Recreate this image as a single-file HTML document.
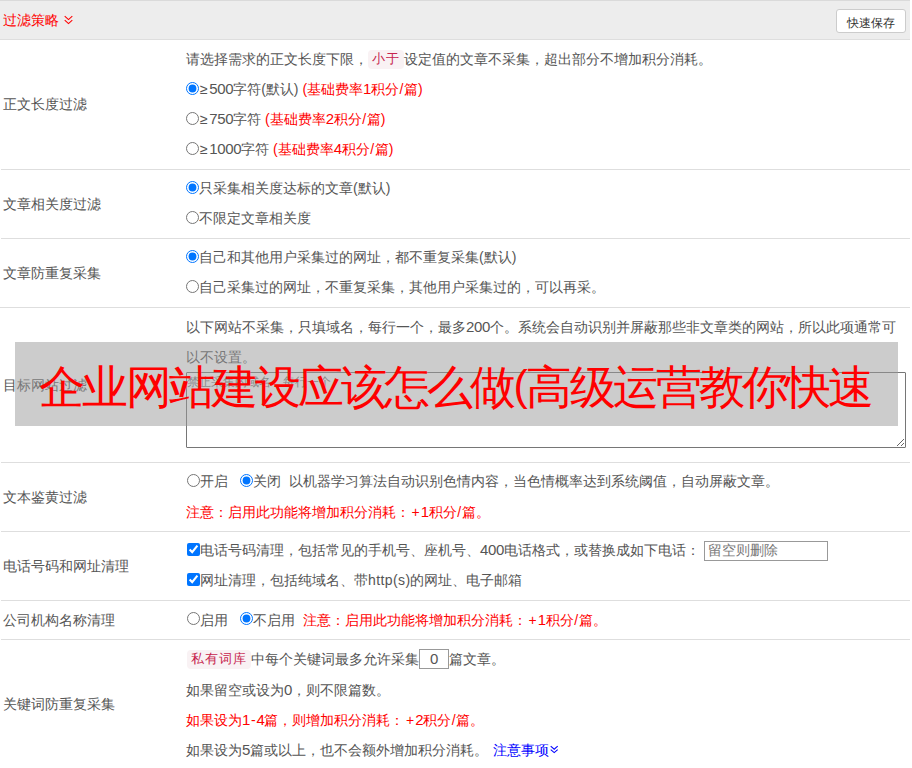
<!DOCTYPE html>
<html><head><meta charset="utf-8">
<style>
html,body{margin:0;padding:0;background:#fff;width:912px;height:768px;overflow:hidden;}
body{font-family:"Liberation Sans",sans-serif;font-size:14px;color:#555;position:relative;}
.a{position:absolute;white-space:nowrap;}
.hdr{left:0;top:0;width:910px;height:39px;background:#ededed;border-top:1px solid #dadada;box-sizing:border-box;}
.hl{position:absolute;left:1px;width:909px;height:1px;background:#dedede;}
.lbl{position:absolute;left:3px;height:30px;line-height:30px;white-space:nowrap;}
.ln{position:absolute;left:186px;height:30px;line-height:30px;white-space:nowrap;}
.red{color:#f00;}
i{font-style:normal;}
.ge{margin-left:1px;margin-right:1.5px;}
.n{font-size:15px;letter-spacing:-0.35px;}
.pl{margin-left:1.5px;margin-right:1px;}
.sl{margin-left:0.5px;margin-right:0.5px;}
.code{display:inline-block;background:#f9f2f4;color:#c7254e;border-radius:4px;font-size:12.6px;letter-spacing:1px;line-height:19px;height:19px;padding:0 4px;vertical-align:top;margin-top:6px;}
.rad{position:absolute;width:13px;height:13px;margin:0;}
.btn{left:836px;top:9px;width:69.5px;height:24px;box-sizing:border-box;border:1px solid #ccc;border-radius:3px;background:#fff;font-size:12px;line-height:22px;padding-top:2px;text-align:center;color:#333;}
.ov{left:15px;top:342px;width:883px;height:84px;background:rgba(153,153,153,0.5);overflow:hidden;text-align:center;}
.ov span{color:#f00;font-size:46px;letter-spacing:-2.9px;line-height:84px;position:absolute;left:24.4px;top:2.5px;white-space:nowrap;}
.ov b{font-weight:normal;font-size:43px;letter-spacing:0;margin-right:-1.4px;position:relative;top:-3px;}
textarea{position:absolute;left:186px;top:372px;width:720px;height:76px;box-sizing:border-box;margin:0;border:1px solid #767676;border-radius:1px;font-family:"Liberation Sans",sans-serif;font-size:12px;padding:1px 1.5px 1px 0;resize:both;}
textarea::placeholder{color:#777;}
.inp{position:absolute;box-sizing:border-box;border:1px solid #999;background:#fff;}
</style></head><body>
<!-- header -->
<div class="a hdr"></div>
<div class="hl" style="top:39px;left:0;width:910px"></div>
<div class="lbl red" style="top:5px">过滤策略</div>
<svg class="a" style="left:64px;top:15px" width="9" height="10" viewBox="0 0 9 10"><path d="M0.7 1.2L4.5 4.6L8.3 1.2M0.7 5.2L4.5 8.6L8.3 5.2" fill="none" stroke="#f00" stroke-width="1.1"/></svg>
<div class="a btn">快速保存</div>

<!-- row lines -->
<div class="hl" style="top:169px"></div>
<div class="hl" style="top:238px"></div>
<div class="hl" style="top:307px;left:0;width:910px"></div>
<div class="hl" style="top:462px"></div>
<div class="hl" style="top:531px"></div>
<div class="hl" style="top:600px"></div>
<div class="hl" style="top:639px"></div>

<!-- labels -->
<div class="lbl" style="top:89px">正文长度过滤</div>
<div class="lbl" style="top:189px">文章相关度过滤</div>
<div class="lbl" style="top:258px">文章防重复采集</div>
<div class="lbl" style="top:370px">目标网站过滤</div>
<div class="lbl" style="top:482px">文本鉴黄过滤</div>
<div class="lbl" style="top:551px">电话号码和网址清理</div>
<div class="lbl" style="top:605px">公司机构名称清理</div>
<div class="lbl" style="top:689px">关键词防重复采集</div>

<!-- row 2 -->
<div class="ln" style="top:44px">请选择需求的正文长度下限，<span class="code">小于</span>设定值的文章不采集，超出部分不增加积分消耗。</div>
<input type="radio" class="rad" style="left:186px;top:82px" checked>
<div class="ln" style="top:74px;left:199px"><i class="ge">≥</i><i class="n">500</i>字符(默认) <span class="red">(基础费率<i class="n">1</i>积分<i class="sl">/</i>篇)</span></div>
<input type="radio" class="rad" style="left:186px;top:112px">
<div class="ln" style="top:104px;left:199px"><i class="ge">≥</i><i class="n">750</i>字符 <span class="red">(基础费率<i class="n">2</i>积分<i class="sl">/</i>篇)</span></div>
<input type="radio" class="rad" style="left:186px;top:142px">
<div class="ln" style="top:134px;left:199px"><i class="ge">≥</i><i class="n">1000</i>字符 <span class="red">(基础费率<i class="n">4</i>积分<i class="sl">/</i>篇)</span></div>

<!-- row 3 -->
<input type="radio" class="rad" style="left:186px;top:181px" checked>
<div class="ln" style="top:173px;left:199px">只采集相关度达标的文章(默认)</div>
<input type="radio" class="rad" style="left:186px;top:211px">
<div class="ln" style="top:203px;left:199px">不限定文章相关度</div>

<!-- row 4 -->
<input type="radio" class="rad" style="left:186px;top:250px" checked>
<div class="ln" style="top:242px;left:199px">自己和其他用户采集过的网址，都不重复采集(默认)</div>
<input type="radio" class="rad" style="left:186px;top:280px">
<div class="ln" style="top:272px;left:199px">自己采集过的网址，不重复采集，其他用户采集过的，可以再采。</div>

<!-- row 5 -->
<div class="ln" style="top:312px">以下网站不采集，只填域名，每行一个，最多<i class="n">200</i>个。系统会自动识别并屏蔽那些非文章类的网站，所以此项通常可</div>
<div class="ln" style="top:342px">以不设置。</div>
<textarea placeholder="禁止采集的域名，每行一个"></textarea>

<!-- row 6 -->
<input type="radio" class="rad" style="left:187px;top:474px">
<div class="ln" style="top:466px;left:200px">开启</div>
<input type="radio" class="rad" style="left:240px;top:474px" checked>
<div class="ln" style="top:466px;left:253px">关闭</div>
<div class="ln" style="top:466px;left:289px">以机器学习算法自动识别色情内容，当色情概率达到系统阈值，自动屏蔽文章。</div>
<div class="ln red" style="top:497px">注意：启用此功能将增加积分消耗：<i class="pl">+</i><i class="n">1</i>积分<i class="sl">/</i>篇。</div>

<!-- row 7 -->
<input type="checkbox" class="rad" style="left:187px;top:543px" checked>
<div class="ln" style="top:535px;left:200px">电话号码清理，包括常见的手机号、座机号、<i class="n">400</i>电话格式，或替换成如下电话：</div>
<div class="inp" style="left:704px;top:541px;width:124px;height:20px;"><span style="position:absolute;left:3px;top:-1px;line-height:18px;color:#777">留空则删除</span></div>
<input type="checkbox" class="rad" style="left:187px;top:573px" checked>
<div class="ln" style="top:565px;left:200px">网址清理，包括纯域名、带<i style="letter-spacing:0.4px">http(s)</i>的网址、电子邮箱</div>

<!-- row 8 -->
<input type="radio" class="rad" style="left:187px;top:612px">
<div class="ln" style="top:605px;left:200px">启用</div>
<input type="radio" class="rad" style="left:240px;top:612px" checked>
<div class="ln" style="top:605px;left:253px">不启用</div>
<div class="ln red" style="top:605px;left:303px">注意：启用此功能将增加积分消耗：<i class="pl">+</i><i class="n">1</i>积分<i class="sl">/</i>篇。</div>

<!-- row 9 -->
<div class="ln" style="top:644px;left:187px"><span class="code">私有词库</span>中每个关键词最多允许采集</div>
<div class="inp" style="left:419px;top:649px;width:30px;height:20px;text-align:center;line-height:18px"><i class="n">0</i></div>
<div class="ln" style="top:644px;left:449px">篇文章。</div>
<div class="ln" style="top:675px">如果留空或设为<i class="n">0</i>，则不限篇数。</div>
<div class="ln red" style="top:705px">如果设为<i class="n">1</i><i style="margin:0 0.9px">-</i><i class="n">4</i>篇，则增加积分消耗：<i class="pl">+</i><i class="n">2</i>积分<i class="sl">/</i>篇。</div>
<div class="ln" style="top:735px">如果设为<i class="n">5</i>篇或以上，也不会额外增加积分消耗。 <span style="color:#00f;margin-left:1px">注意事项</span></div>

<!-- overlay -->
<div class="a ov"><span>企业网站建设应该怎么做<b>(</b>高级运营教你快速</span></div>
<svg class="a" style="left:549.5px;top:745px" width="9" height="9" viewBox="0 0 9 9"><path d="M0.7 1.2L4.2 4.2L7.7 1.2M0.7 4.6L4.2 7.6L7.7 4.6" fill="none" stroke="#00f" stroke-width="1.1"/></svg>
</body></html>
